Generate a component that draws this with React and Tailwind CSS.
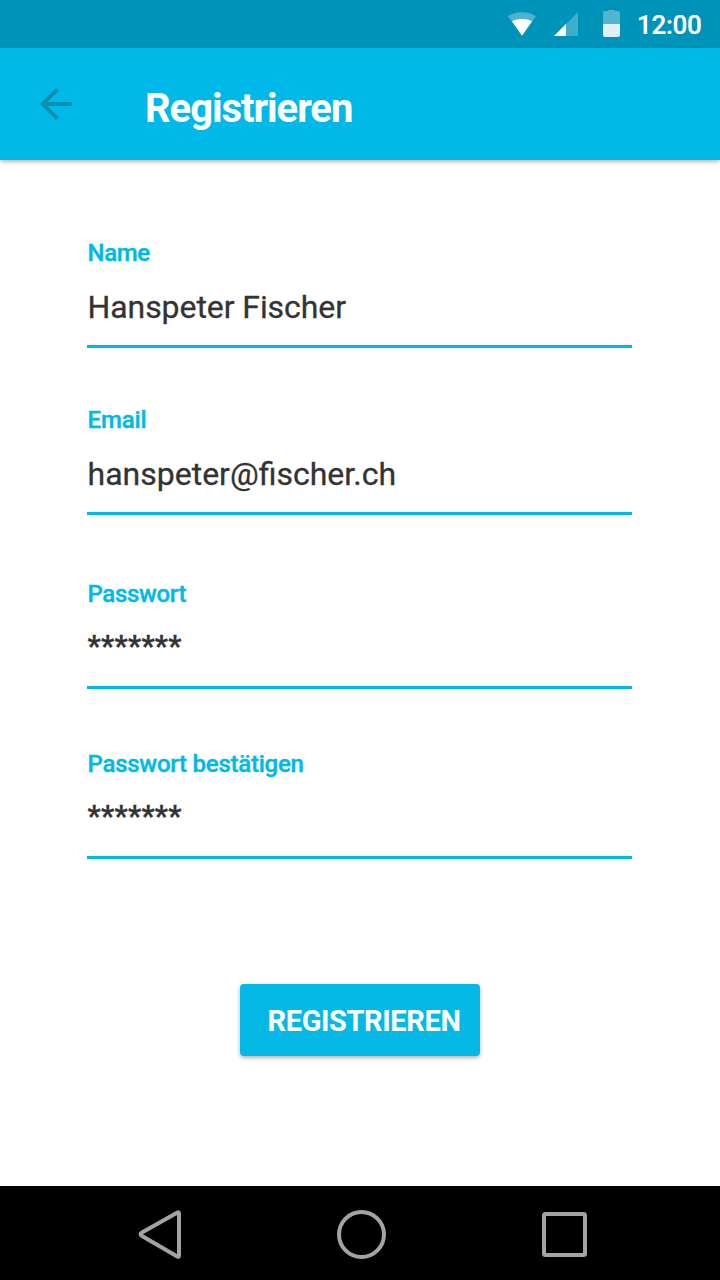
const fields = [
  { label: 'Name', value: 'Hanspeter Fischer', gap: 'mt-0', labelStyle: 'tracking-[-0.4px]', valueStyle: 'mt-[21px] mb-[19px] text-[32px] tracking-[-0.08px]' },
  { label: 'Email', value: 'hanspeter@fischer.ch', gap: 'mt-[58px]', labelStyle: 'tracking-[-0.15px]', valueStyle: 'mt-[21px] mb-[19px] text-[32px]' },
  { label: 'Passwort', value: '*******', gap: 'mt-[65px]', labelStyle: 'tracking-[-0.35px]', valueStyle: 'mt-[19px] mb-[21px] text-[29px] font-bold tracking-[0.3px]' },
  { label: 'Passwort bestätigen', value: '*******', gap: 'mt-[61px]', labelStyle: 'tracking-[-0.25px]', valueStyle: 'mt-[19px] mb-[21px] text-[29px] font-bold tracking-[0.3px]' },
];

function StatusBar() {
  return (
    <div className="flex h-12 items-center justify-end bg-[#0093ba] pr-[18px] text-white">
      <svg width="130" height="48" viewBox="0 0 130 48" fill="currentColor">
        <path d="M8 16.2C16 11 28 11 36 16.2L22 35.5Z" opacity=".3" />
        <path d="M12 21.2C17.5 18.2 26.5 18.2 32 21.2L22 35.8Z" />
        <path d="M78 12V36H54Z" opacity=".25" />
        <path d="M66 24V36H54Z" />
        <path d="M103 13Q103 11 105 11H108V10H115V11H118Q120 11 120 13V24H103Z" opacity=".32" />
        <path d="M103 24H120V35Q120 37 118 37H105Q103 37 103 35Z" opacity=".87" />
      </svg>
      <span className="ml-[7px] w-[65px] pt-px text-[26px] leading-12 font-medium tracking-[-0.3px] [-webkit-text-stroke:0.2px]">12:00</span>
    </div>
  );
}

function AppBar() {
  return (
    <header className="relative flex h-28 items-center bg-[#00b9e8] pl-10 shadow-[0_2px_4px_rgba(0,0,0,0.28)]">
      <button aria-label="Zurück" className="text-[#0a8fae]">
        <svg width="32" height="32" viewBox="0 0 32 32" fill="currentColor">
          <path d="M32 14H7.66L18.84 2.82L16 0L0 16L16 32L18.82 29.18L7.66 18H32Z" />
        </svg>
      </button>
      <h1 className="ml-[73px] pt-[9px] text-[40px] leading-12 font-bold tracking-[-1.05px] text-white">Registrieren</h1>
    </header>
  );
}

function Field({ label, value, gap, labelStyle, valueStyle }) {
  return (
    <div className={`flex flex-col border-b-[3px] border-[#00b9e8] pl-[0.5px] ${gap}`}>
      <span className={`text-2xl leading-7 font-medium text-[#00b9e8] [-webkit-text-stroke:0.4px] ${labelStyle}`}>{label}</span>
      <span className={`leading-[38px] text-[#333333] [-webkit-text-stroke:0.3px] ${valueStyle}`}>{value}</span>
    </div>
  );
}

function NavBar() {
  return (
    <nav className="flex h-[94px] items-center bg-black">
      <svg width="720" height="94" viewBox="0 0 720 94" fill="none" stroke="#a3a3a3" strokeWidth="4" strokeLinejoin="round">
        <path d="M177.5 26.5Q179 25.6 179 27.5V69.5Q179 71.5 177.3 70.5L142 50Q139 48.3 142 46.6Z" />
        <circle cx="361.5" cy="48.5" r="22.5" />
        <rect x="544" y="28" width="41" height="41" rx="1.5" />
      </svg>
    </nav>
  );
}

export default function App() {
  return (
    <div className="flex h-[1280px] w-[720px] flex-col overflow-hidden bg-white font-['Roboto',sans-serif]">
      <StatusBar />
      <AppBar />
      <main className="flex flex-1 flex-col pt-[79px]">
        <form className="ml-[87px] flex w-[545px] flex-col">
          {fields.map((field) => (
            <Field key={field.label} {...field} />
          ))}
        </form>
        <button className="mt-[125px] flex h-[72px] w-60 items-center justify-center self-center rounded-[4px] bg-[#05b9e7] pt-[3px] pl-[8px] text-[29px] font-bold tracking-[-0.4px] text-white shadow-[0_2px_4px_rgba(0,0,0,0.3)]">
          REGISTRIEREN
        </button>
      </main>
      <NavBar />
    </div>
  );
}
